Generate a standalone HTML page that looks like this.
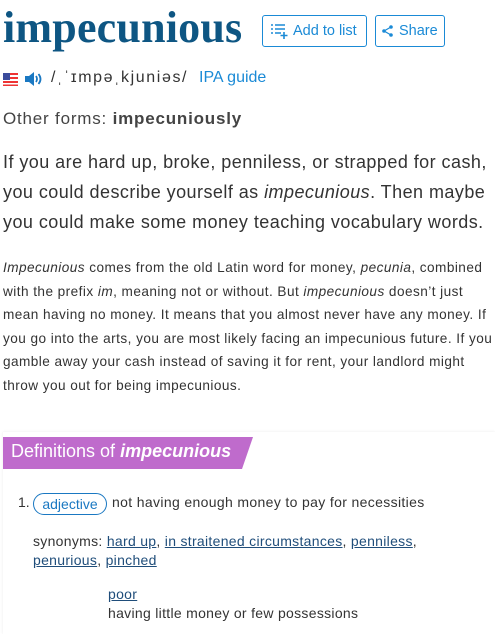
<!DOCTYPE html>
<html><head><style>
body{margin:0;width:495px;height:634px;overflow:hidden;background:#fff;font-family:"Liberation Sans",sans-serif;color:#333;position:relative}
.a{position:absolute;white-space:nowrap}
h1{position:absolute;left:3px;top:2px;margin:0;font:bold 44px "Liberation Serif",serif;color:#0e5683;letter-spacing:0.2px}
.btn{position:absolute;top:15px;height:32px;border:1px solid #1a8ad6;border-radius:3px;color:#1a8ad6;font-size:14.5px;line-height:31px;box-sizing:border-box}
u{text-decoration:underline;color:#1f4d7a}
</style></head><body>
<h1>impecunious</h1>
<div class="btn" style="left:262px;width:105px;padding-left:30px">Add to list
<svg style="position:absolute;left:7px;top:7px" width="18" height="17" viewBox="0 0 18 17" fill="none" stroke="#1a8ad6" stroke-width="1.6"><path d="M1 2h2M5 2h10M1 6h2M5 6h10M1 10h2M5 10h6M14 9v7M10.5 12.5h7"/></svg></div>
<div class="btn" style="left:375px;width:70px;padding-left:23px">Share
<svg style="position:absolute;left:6px;top:9px" width="11" height="12" viewBox="0 0 11 12"><path d="M9 2L2 6L9 10" fill="none" stroke="#1a8ad6" stroke-width="1.2"/><circle cx="9" cy="2" r="1.8" fill="#1a8ad6"/><circle cx="2" cy="6" r="1.8" fill="#1a8ad6"/><circle cx="9" cy="10" r="1.8" fill="#1a8ad6"/></svg></div>
<svg class="a" style="left:3px;top:73px" width="15" height="13"><rect width="15" height="13" fill="#e33"/><rect y="2" width="15" height="2" fill="#fff"/><rect y="6" width="15" height="2" fill="#fff"/><rect y="10" width="15" height="1.5" fill="#fff"/><rect width="7" height="7" fill="#3b4c9c"/></svg>
<svg class="a" style="left:24px;top:71px" width="20" height="16" viewBox="0 0 20 16"><path d="M1 5h4l5-4v14l-5-4H1z" fill="#1a78c2"/><path d="M12 5q2 3 0 6M14.5 3q4 5 0 10" stroke="#1a78c2" stroke-width="1.8" fill="none"/></svg>
<div class="a" style="left:51px;top:69px;font-size:16px;color:#333;letter-spacing:1.6px">/ˌˈɪmpəˌkjuniəs/</div>
<div class="a" style="left:199px;top:69px;font-size:16px;color:#1a8ad6">IPA guide</div>
<div class="a" style="left:3px;top:109px;font-size:17px;color:#444;letter-spacing:0.8px">Other forms: <b>impecuniously</b></div>
<div class="a" style="left:3px;top:147px;font-size:18px;line-height:30px;color:#333;letter-spacing:0.45px">If you are hard up, broke, penniless, or strapped for cash,<br>you could describe yourself as <i>impecunious</i>. Then maybe<br>you could make some money teaching vocabulary words.</div>
<div class="a" style="left:3px;top:256px;font-size:13.6px;line-height:23.6px;color:#333;letter-spacing:0.45px"><i>Impecunious</i> comes from the old Latin word for money, <i>pecunia</i>, combined<br>with the prefix <i>im</i>, meaning not or without. But <i>impecunious</i> doesn’t just<br>mean having no money. It means that you almost never have any money. If<br>you go into the arts, you are most likely facing an impecunious future. If you<br>gamble away your cash instead of saving it for rent, your landlord might<br>throw you out for being impecunious.</div>
<div class="a" style="left:3px;top:432px;width:492px;height:202px;box-shadow:0 0 3px rgba(0,0,0,.08)"></div>
<svg class="a" style="left:3px;top:437px" width="250" height="32"><polygon points="0,0 250,0 239,32 0,32" fill="#bf6bcc"/></svg>
<div class="a" style="left:11px;top:441px;font-size:18px;color:#fff">Definitions of <b><i>impecunious</i></b></div>
<div class="a" style="left:18px;top:494px;font-size:14px;color:#333">1.</div>
<div class="a" style="left:33px;top:493px;width:74px;height:22px;border:1px solid #1a78c2;border-radius:11px;box-sizing:border-box;font-size:14px;color:#1a78c2;text-align:center;line-height:20px">adjective</div>
<div class="a" style="left:112px;top:494px;font-size:14px;color:#333;letter-spacing:0.35px">not having enough money to pay for necessities</div>
<div class="a" style="left:33px;top:532px;font-size:14px;line-height:18.5px;color:#333;letter-spacing:0.3px">synonyms: <u>hard up</u>, <u>in straitened circumstances</u>, <u>penniless</u>,<br><u>penurious</u>, <u>pinched</u></div>
<div class="a" style="left:108px;top:585px;font-size:14px;line-height:18.5px;color:#333;letter-spacing:0.3px"><u>poor</u><br>having little money or few possessions</div>
</body></html>
